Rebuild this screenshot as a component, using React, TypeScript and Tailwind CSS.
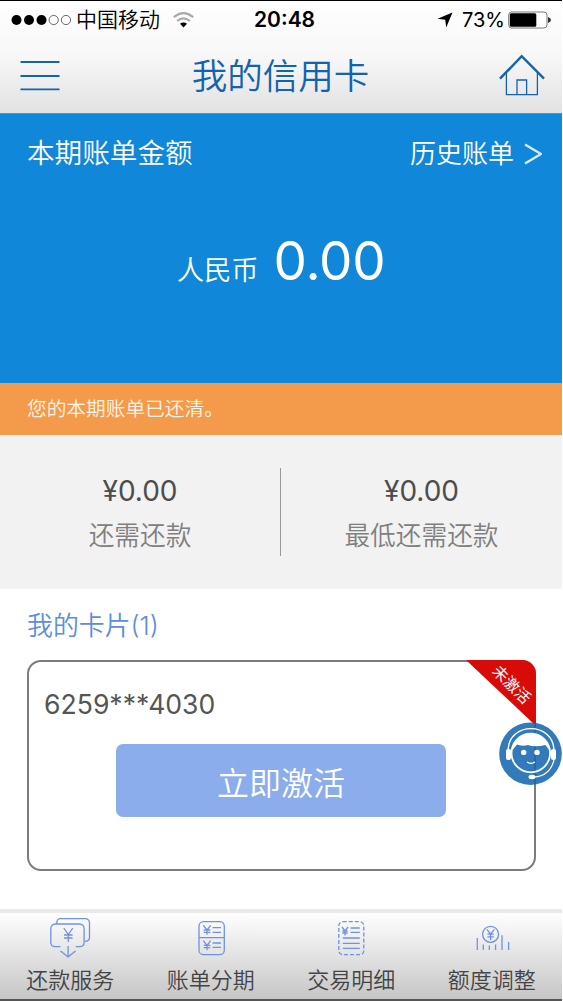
import type { ReactNode } from "react";

const stats = [
  { value: "¥0.00", label: "还需还款" },
  { value: "¥0.00", label: "最低还需还款" },
];

function NavIcon({ children }: { children: ReactNode }) {
  return (
    <svg
      width="42"
      height="42"
      viewBox="0 0 42 42"
      fill="none"
      stroke="#6f93e0"
      strokeWidth="1.3"
    >
      {children}
    </svg>
  );
}

const tabs = [
  {
    label: "还款服务",
    icon: (
      <NavIcon>
        <path d="M11.5 29.7H6.3Q1.8 29.7 1.8 25.2V11.5A4.5 4.5 0 0 1 6.3 7H30.6A4.5 4.5 0 0 1 35.1 11.5V25.2Q35.1 29.7 30.5 29.7H26.8" />
        <path d="M7.8 7V5.5A3.8 3.8 0 0 1 11.6 1.7H36.5A4 4 0 0 1 40.5 5.7V20.5Q40.5 24.3 36 24.3" />
        <path d="M19.1 29V40M11.5 34L19.1 40L26.5 34" />
        <path d="M14.8 11L19.3 17.5L23.8 11M19.3 17.5V25M15 18H23.6M15 21H23.6" />
      </NavIcon>
    ),
  },
  {
    label: "账单分期",
    icon: (
      <NavIcon>
        <rect x="9" y="4.7" width="25.3" height="33" rx="4.5" />
        <path d="M9 20.7H34.3M22.6 10.7H31M22.6 15.3H31M22.6 26H31M22.6 30.3H31" />
        <path d="M13.3 8.3L17 13L20.7 8.3M17 13V17.7M13.7 13H20.3M13.7 15.3H20.3" />
        <path d="M13.3 23.7L17 28.4L20.7 23.7M17 28.4V33.3M13.7 28.4H20.3M13.7 30.7H20.3" />
      </NavIcon>
    ),
  },
  {
    label: "交易明细",
    icon: (
      <NavIcon>
        <rect x="8.8" y="4.7" width="25" height="33" rx="4" strokeDasharray="4 2" />
        <path d="M20.5 11H29.8M20.5 15.3H29.8M12.8 21H29.8M12.8 26.3H29.8M12.8 31.3H29.8" />
        <path d="M12 10L15 14L18.1 10M15 14V18.5M12.4 14H17.7M12.4 16H17.7" />
      </NavIcon>
    ),
  },
  {
    label: "额度调整",
    icon: (
      <NavIcon>
        <circle cx="19.6" cy="17.3" r="8" />
        <path d="M15.8 12.3L19.6 17L23.4 12.3M19.6 17V23M16.4 17.2H22.8M16.4 19.8H22.8" />
        <path d="M6.3 21V33M12.3 27.5V33M18.3 28.5V33M24.6 27.5V33M31 18.3V33M37.6 25V33" />
      </NavIcon>
    ),
  },
];

function StatusBar() {
  return (
    <div className="flex h-[38px] items-center pl-[11px] text-[21px] text-black">
      <svg width="61" height="12" viewBox="0 0 61 12">
        <circle cx="5.5" cy="6" r="5" />
        <circle cx="18" cy="6" r="5" />
        <circle cx="30.5" cy="6" r="5" />
        <circle cx="42.7" cy="6" r="4.6" fill="none" stroke="#444" strokeWidth="0.8" />
        <circle cx="55" cy="6" r="4.6" fill="none" stroke="#444" strokeWidth="0.8" />
      </svg>
      <span className="ml-[4px] w-[84px] whitespace-nowrap font-[350]">中国移动</span>
      <svg className="ml-[13px]" width="21" height="16" viewBox="0 0 21 16" fill="none">
        <path d="M0.8 5.2Q10.5 -2.8 20.2 5.2" stroke="#aaa" strokeWidth="2.2" />
        <path d="M4.2 9Q10.5 3.8 16.8 9" stroke="#aaa" strokeWidth="2.2" />
        <path d="M7 11.8Q10.5 9 14 11.8L10.5 15.6Z" fill="#000" />
      </svg>
      <span className="ml-[60px] w-[64px] whitespace-nowrap font-semibold">20:48</span>
      <svg className="ml-[119px]" width="16" height="16" viewBox="0 0 16 16">
        <path d="M15.5 0.5L9.2 15.5L8.2 7.8L0.5 6.8Z" />
      </svg>
      <span className="ml-[9px] w-[42px] whitespace-nowrap text-[20px]">73%</span>
      <svg className="ml-[4px]" width="44" height="18" viewBox="0 0 44 18">
        <rect x="0.7" y="1" width="38.3" height="16" rx="3" fill="#fff" stroke="#777" strokeWidth="1" />
        <rect x="1.8" y="2.2" width="26.5" height="13.6" rx="1.5" />
        <path d="M40 6Q43 7 43 9Q43 11 40 12Z" fill="#333" />
      </svg>
    </div>
  );
}

function Header() {
  return (
    <header className="h-[113px] border-t border-black bg-linear-to-b from-white via-[#f7f7f7] to-[#e2e2e2]">
      <StatusBar />
      <div className="flex h-[74px] items-center justify-between pr-[17px] pl-[20px] text-[#1263b0]">
        <svg width="40" height="32" viewBox="0 0 40 32" stroke="currentColor" strokeWidth="1.8">
          <path d="M0.5 2H39.5M0.5 16H39.5M0.5 29.3H39.5" />
        </svg>
        <h1 className="mt-[2px] ml-[2px] text-[35.5px] leading-none font-[350]">我的信用卡</h1>
        <svg className="-mt-[2px]" width="46" height="42" viewBox="0 0 46 42" fill="none" stroke="currentColor">
          <path d="M1 24.7L22.7 2.2L45 24.7" strokeWidth="2.4" />
          <path d="M7.4 19V40.6H38.4V19M18 40V26H27.6V40" strokeWidth="1.3" />
        </svg>
      </div>
    </header>
  );
}

function BillPanel() {
  return (
    <section className="h-[270px] border-t border-[#4a96cf] bg-[#1087d9] text-white">
      <div className="flex h-[79px] items-center justify-between pr-[20px] pl-[27px] font-[350]">
        <h2 className="text-[27.6px]">本期账单金额</h2>
        <div className="flex items-center gap-[10px]">
          <span className="text-[26px]">历史账单</span>
          <svg width="18" height="22" viewBox="0 0 18 22" fill="none" stroke="#d9edfb" strokeWidth="2.3">
            <path d="M1 1.5L17 11L1 20.5" />
          </svg>
        </div>
      </div>
      <div className="flex h-[140px] items-baseline justify-center pt-[29px]">
        <span className="text-[27.3px] font-[350]">人民币</span>
        <span className="ml-[15px] text-[53px] tracking-[-0.3px]">0.00</span>
      </div>
    </section>
  );
}

function Assistant() {
  return (
    <svg
      className="absolute top-[722px] left-[499px]"
      width="63"
      height="64"
      viewBox="0 0 63 64"
      fill="none"
    >
      <circle cx="31.5" cy="31.7" r="31.3" fill="#1768b1" fillOpacity="0.88" />
      <path d="M9 28C10 -0.5 54 -0.5 55 28" stroke="#fff" strokeWidth="1.4" />
      <circle cx="31.8" cy="31" r="19.3" stroke="#fff" strokeWidth="1.8" />
      <path d="M13.5 28C15 6 48.5 6 50 28L46.5 23Q36 25.5 29 23Q23 24.5 18 22.5Z" fill="#fff" />
      <rect x="7" y="27" width="5" height="11" rx="2" fill="#fff" />
      <rect x="52" y="27" width="5" height="11" rx="2" fill="#fff" />
      <circle cx="24.7" cy="30.4" r="2.7" fill="#fff" />
      <circle cx="38" cy="30.4" r="2.7" fill="#fff" />
      <path d="M28 40Q32 42.6 36 40" stroke="#fff" strokeWidth="1.2" />
      <path d="M55 38Q51 54 35 55" stroke="#fff" strokeWidth="1.2" />
      <ellipse cx="33" cy="55" rx="3.5" ry="2.2" fill="#fff" />
    </svg>
  );
}

export default function App() {
  return (
    <div className="relative flex h-[1001px] w-[563px] flex-col overflow-hidden border-r border-white bg-white font-['Inter','Noto_Sans_CJK_SC',sans-serif]">
      <Header />
      <BillPanel />

      <p className="flex h-[52px] items-center bg-[#f39a4b] pt-[2px] pl-[27px] text-[19.7px] font-[350] text-[#fff4e8]">
        您的本期账单已还清。
      </p>

      <section className="flex h-[154px] items-center bg-[#f2f2f2]">
        {stats.map((stat, index) => (
          <div
            key={stat.label}
            className={
              index === 0
                ? "h-[88px] w-[281px] border-r border-[#999] text-center"
                : "h-[88px] flex-1 text-center"
            }
          >
            <p className="mt-[2px] text-[28px] leading-[42px] text-[#4d4d4d]">{stat.value}</p>
            <p className="text-[25.7px] leading-[48px] font-[350] text-[#808080]">{stat.label}</p>
          </div>
        ))}
      </section>

      <section className="px-[27px]">
        <h2 className="h-[71px] pt-px text-[25.9px] leading-[71px] font-[350] text-[#5b8de0]">我的卡片(1)</h2>
        <div className="relative h-[211px] w-[509px] rounded-[14px] border-2 border-[#7c7c7c]">
          <p className="mt-[22px] ml-[15px] text-[26.6px] leading-[40px] text-[#555]">6259***4030</p>
          <button className="mt-[20px] ml-[87px] h-[73px] w-[330px] rounded-[7px] bg-[#8badec] pt-[7px] text-[32px] font-[350] text-white">
            立即激活
          </button>
          <div className="absolute -top-[2px] -right-[2px] h-[66px] w-[70px] rounded-tr-[14px] bg-[#d90b08] [clip-path:polygon(0_0,100%_0,100%_100%)]">
            <span className="absolute top-[15px] left-[22px] rotate-45 text-[15.5px] leading-[20px] whitespace-nowrap text-white">
              未激活
            </span>
          </div>
        </div>
      </section>

      <nav className="mt-auto flex h-[92px] border-t-4 border-b-2 border-t-[#e9e9e9] border-b-[#555] bg-linear-to-b from-white to-[#c6c6c6]">
        {tabs.map((tab) => (
          <div key={tab.label} className="flex flex-1 flex-col items-center pt-[4px]">
            {tab.icon}
            <span className="mt-[5px] text-[22px] leading-[32px] font-[350] text-[#444]">{tab.label}</span>
          </div>
        ))}
      </nav>

      <Assistant />
    </div>
  );
}
